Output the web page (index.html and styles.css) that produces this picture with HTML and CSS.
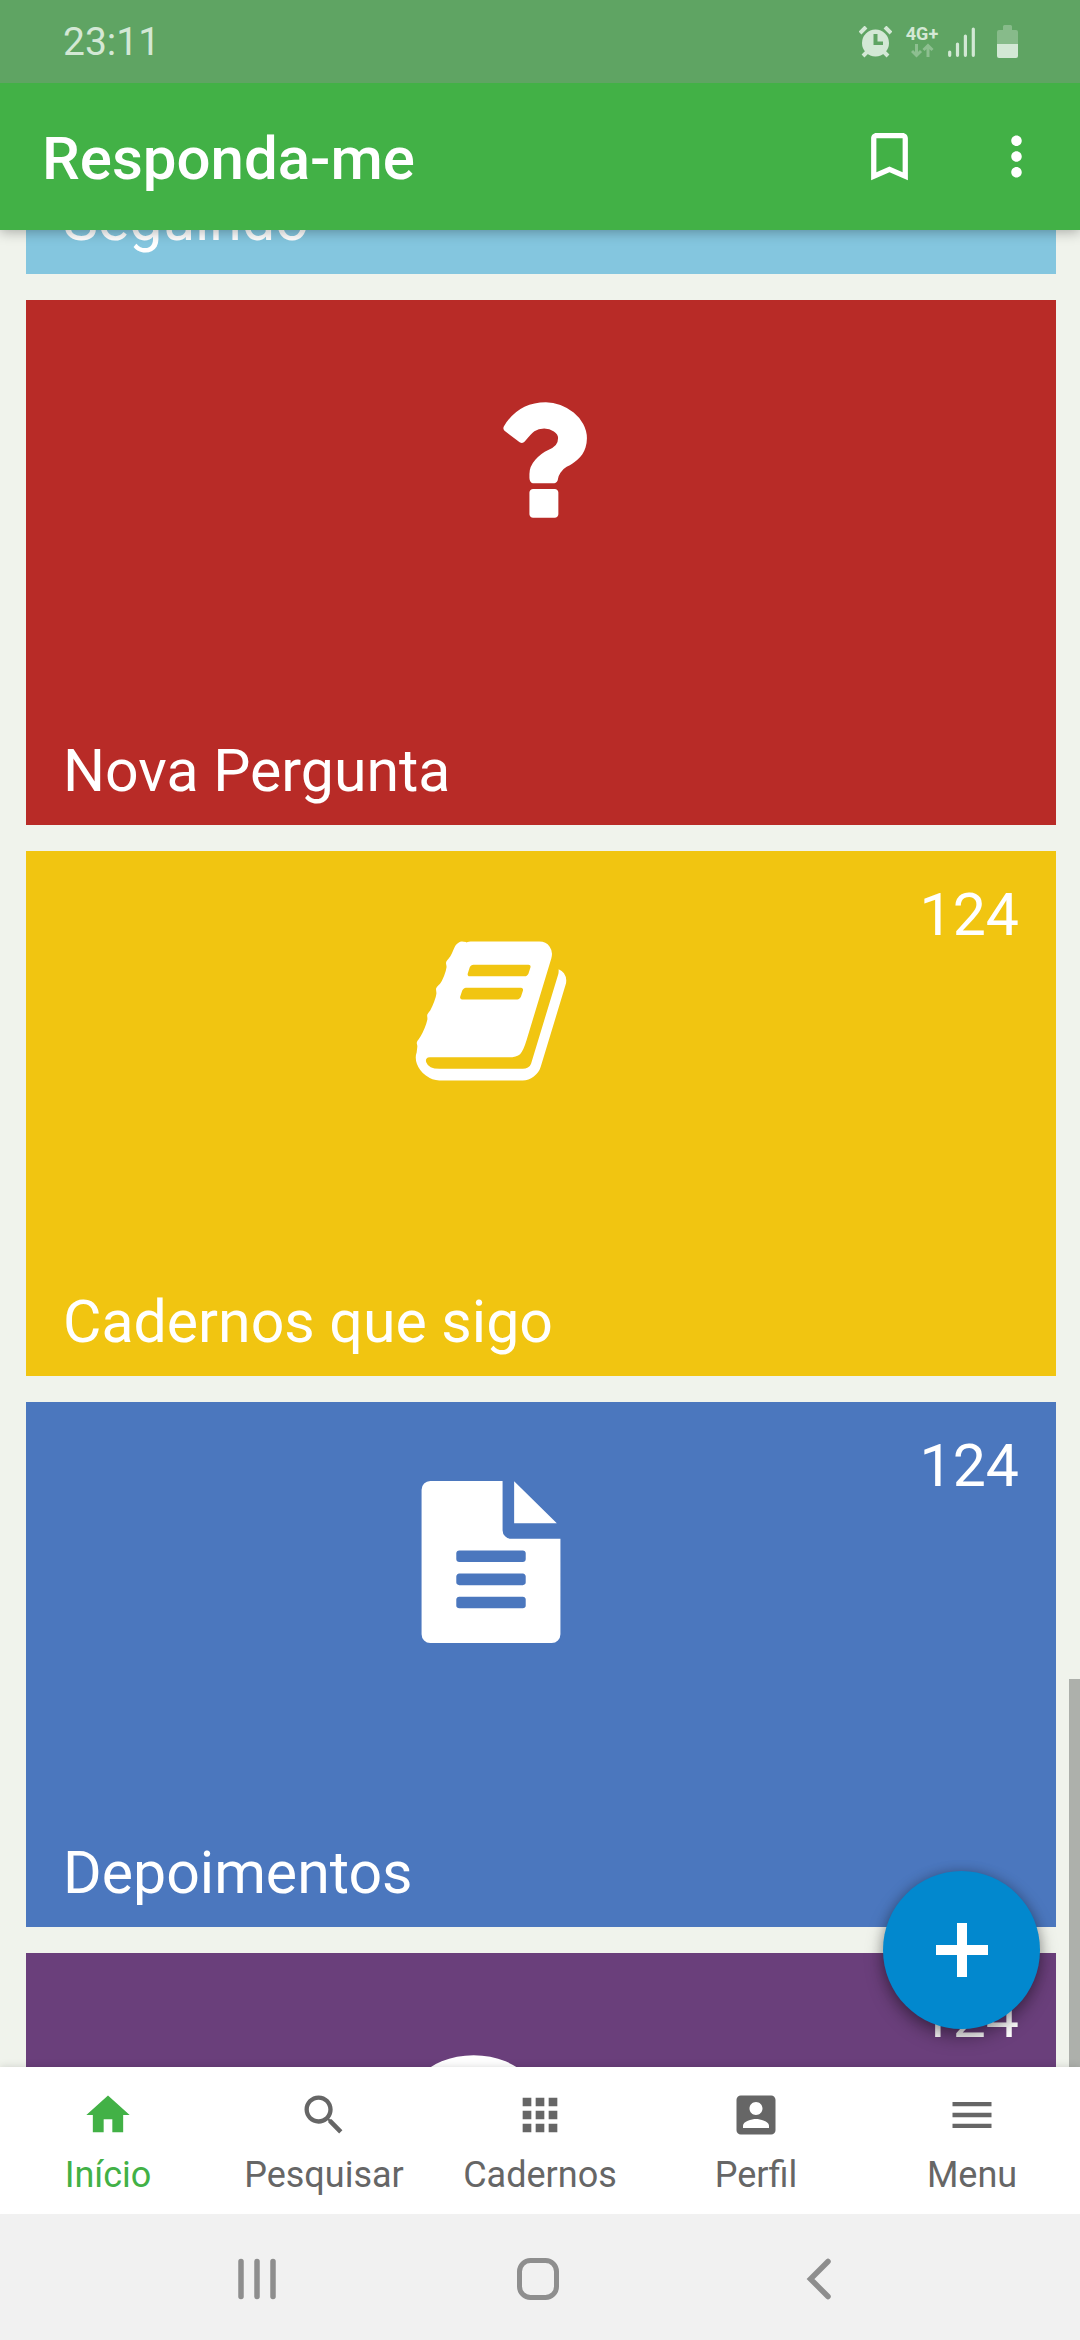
FILE: index.html
```html
<!DOCTYPE html>
<html lang="pt-BR">
<head>
<meta charset="utf-8">
<meta name="viewport" content="width=device-width, initial-scale=1">
<title>Responda-me</title>
<link rel="stylesheet" href="styles.css">
</head>
<body>
<div class="screen">
  <div class="status">
    <span class="clock">23:11</span>
    <div class="status-icons">
      <svg class="alarm" viewBox="0 0 33 32" aria-hidden="true">
        <path d="M1 7 7 1M32 7 26 1" stroke="currentColor" stroke-width="4" fill="none"/>
        <path d="M9 25 4 30M24 25 29 30" stroke="currentColor" stroke-width="4" fill="none"/>
        <path fill="currentColor" fill-rule="evenodd" d="M16.500 3.500a13.500 13.500 0 1 0 0 27a13.500 13.500 0 0 0 0-27zM14.500 8h4v7.500h5.500v3.500h-9.500z"/>
      </svg>
      <div class="network">
        <span>4G+</span>
        <svg class="arrows" viewBox="0 0 23 15" aria-hidden="true"><path d="M5.500 1v11M1 8l4.500 4.500L10 8M17 14V3M12.500 7 17 2.500 21.500 7" fill="none" stroke="currentColor" stroke-width="3"/></svg>
      </div>
      <svg class="signal" viewBox="0 0 27 30" aria-hidden="true"><path d="M1.700 25v3.300M9.500 17v11.300M17.400 9v19.300M25.300 2v26.300" stroke="currentColor" stroke-width="3.200" stroke-linecap="round"/></svg>
      <svg class="battery" viewBox="0 0 21 33" aria-hidden="true"><path d="M6 5V1.500Q6 0 7.500 0h6Q15 0 15 1.500V5h4q2 0 2 2v12H0V7q0-2 2-2z" fill="currentColor" opacity=".35"/><path d="M0 19h21v12q0 2-2 2H2q-2 0-2-2z" fill="currentColor"/></svg>
    </div>
  </div>

  <header class="appbar">
    <h1>Responda-me</h1>
    <button class="icon-button" aria-label="Favoritos"><svg viewBox="0 0 24 24"><path d="M17 3H7c-1.100 0-2 .9-2 2v16l7-3 7 3V5c0-1.100-.9-2-2-2zm0 15-5-2.180L7 18V5h10z"/></svg></button>
    <button class="icon-button" aria-label="Mais opções"><svg viewBox="0 0 24 24"><path d="M12 8c1.100 0 2-.9 2-2s-.9-2-2-2-2 .9-2 2 .9 2 2 2zm0 2c-1.100 0-2 .9-2 2s.9 2 2 2 2-.9 2-2-.9-2-2-2zm0 6c-1.100 0-2 .9-2 2s.9 2 2 2 2-.9 2-2-.9-2-2-2z"/></svg></button>
  </header>

  <div class="viewport">
    <main class="cards">
      <a class="card sky" href="#seguindo">
        <span class="card-name">Seguindo</span>
      </a>
      <a class="card red" href="#nova-pergunta">
        <span class="card-top">
          <svg class="card-icon" viewBox="0 0 1792 1792"><path d="M1088 1256v240q0 16-12 28t-28 12h-240q-16 0-28-12t-12-28v-240q0-16 12-28t28-12h240q16 0 28 12t12 28zm316-600q0 54-15.500 101t-35 76.500-55 59.500-57.500 43.500-61 35.500q-41 23-68.500 65t-27.500 67q0 17-12 32.500t-28 15.500h-240q-15 0-25.500-18.500t-10.500-37.500v-45q0-83 65-156.500t143-108.500q59-27 84-56t25-76q0-42-46.500-74t-107.500-32q-65 0-108 29-35 25-107 115-13 16-31 16-12 0-25-8l-164-125q-13-10-15.500-25t5.500-28q160-266 464-266 80 0 161 31t146 83 106 127.500 41 158.500z"/></svg>
        </span>
        <span class="card-name">Nova Pergunta</span>
      </a>
      <a class="card yellow" href="#cadernos-que-sigo">
        <span class="card-top">
          <svg class="card-icon" viewBox="0 0 1792 1792"><path d="M1703 478q40 57 18 129l-275 906q-19 64-76.500 107.500t-122.500 43.500h-923q-77 0-148.500-53.500t-99.500-131.500q-24-67-2-127 0-4 3-27t4-37q1-8-3-21.500t-3-19.500q2-11 8-21t16.500-23.500 16.500-23.500q23-38 45-91.500t30-91.500q3-10 .5-30t-.5-28q3-11 17-28t17-23q21-36 42-92t25-90q1-9-2.500-32t.5-28q4-13 22-30.500t22-22.500q19-26 42.500-84.500t27.500-96.500q1-8-3-25.500t-2-26.500q2-8 9-18t18-23 17-21q8-12 16.500-30.500t15-35 16-36 19.500-32 26.500-23.500 36-11.500 47.500 5.500l-1 3q38-9 51-9h761q74 0 114 56t18 130l-274 906q-36 119-71.500 153.500t-128.500 34.500h-869q-27 0-38 15-11 16-1 43 24 70 144 70h923q29 0 56-15.500t35-41.500l300-987q7-22 5-57 38 15 59 43zm-1064 2q-4 13 2 22.500t20 9.500h608q13 0 25.500-9.500t16.500-22.500l21-64q4-13-2-22.500t-20-9.500h-608q-13 0-25.500 9.500t-16.500 22.500zm-83 256q-4 13 2 22.500t20 9.500h608q13 0 25.500-9.500t16.500-22.500l21-64q4-13-2-22.500t-20-9.500h-608q-13 0-25.500 9.500t-16.500 22.500z"/></svg>
          <span class="count">124</span>
        </span>
        <span class="card-name">Cadernos que sigo</span>
      </a>
      <a class="card blue" href="#depoimentos">
        <span class="card-top">
          <svg class="card-icon" viewBox="0 0 1792 1792"><path d="M1624 468 1152 4v464zm-504 172h544v1056q0 40-28 68t-68 28h-1344q-40 0-68-28t-28-68v-1600q0-40 28-68t68-28h800v544q0 40 28 68t68 28zm160 736v-64q0-14-9-23t-23-9h-704q-14 0-23 9t-9 23v64q0 14 9 23t23 9h704q14 0 23-9t9-23zm0-256v-64q0-14-9-23t-23-9h-704q-14 0-23 9t-9 23v64q0 14 9 23t23 9h704q14 0 23-9t9-23zm0-256v-64q0-14-9-23t-23-9h-704q-14 0-23 9t-9 23v64q0 14 9 23t23 9h704q14 0 23-9t9-23z" fill-rule="evenodd"/></svg>
          <span class="count">124</span>
        </span>
        <span class="card-name">Depoimentos</span>
      </a>
      <a class="card purple" href="#comentarios" aria-label="124">
        <span class="card-top">
          <svg class="card-icon" viewBox="0 0 1792 1792"><path d="M1408 768q0 139-94 257t-256.500 186.500-353.500 68.500q-86 0-176-16-124 88-278 128-36 9-86 16h-3q-11 0-20.500-8t-11.500-21q-1-3-1-6.500t.5-6.500 2-6l2.500-5 3.500-5.500 4-5 4.500-5 4-4.500q5-6 23-25t26-29.500 22.500-29 25-38.500 20.500-44q-124-72-195-177t-71-224q0-139 94-257t256.500-186.500 353.500-68.500 353.500 68.500 256.500 186.500 94 257zm384 256q0 120-71 224.500t-195 176.500q10 24 20.500 44t25 38.500 22.500 29 26 29.500 23 25q1 1 4 4.500t4.500 5 4 5 3.500 5.500l2.500 5 2 6 .5 6.500-1 6.500q-3 14-13 22t-22 7q-50-7-86-16-154-40-278-128-90 16-176 16-271 0-472-132 58 4 88 4 161 0 309-45t264-129q125-92 192-212t67-254q0-77-23-152 129 71 204 178t75 230z"/></svg>
          <span class="count">124</span>
        </span>
      </a>
    </main>
    <div class="scroll-thumb"></div>
    <button class="fab" aria-label="Adicionar"><svg viewBox="0 0 54 54"><path d="M27 0v54M1 27h52" stroke="currentColor" stroke-width="10"/></svg></button>
  </div>

  <nav class="tabs">
    <a class="tab active" href="#inicio"><svg viewBox="0 0 24 24"><path d="M10 20v-6h4v6h5v-8h3L12 3 2 12h3v8z"/></svg>Início</a>
    <a class="tab" href="#pesquisar"><svg viewBox="0 0 24 24"><path d="M15.500 14h-.79l-.28-.27C15.410 12.590 16 11.110 16 9.500 16 5.910 13.090 3 9.500 3S3 5.910 3 9.500 5.910 16 9.500 16c1.610 0 3.090-.59 4.230-1.570l.27.28v.79l5 4.990L20.490 19zm-6 0C7.010 14 5 11.990 5 9.500S7.010 5 9.500 5 14 7.010 14 9.500 11.990 14 9.500 14z"/></svg>Pesquisar</a>
    <a class="tab" href="#cadernos"><svg viewBox="0 0 24 24"><path d="M4 8h4V4H4zm6 12h4v-4h-4zm-6 0h4v-4H4zm0-6h4v-4H4zm6 0h4v-4h-4zm6-10v4h4V4zm-6 4h4V4h-4zm6 6h4v-4h-4zm0 6h4v-4h-4z"/></svg>Cadernos</a>
    <a class="tab" href="#perfil"><svg viewBox="0 0 24 24"><path d="M3 5v14c0 1.100.89 2 2 2h14c1.100 0 2-.9 2-2V5c0-1.100-.9-2-2-2H5c-1.110 0-2 .9-2 2zm12 4c0 1.660-1.340 3-3 3s-3-1.340-3-3 1.340-3 3-3 3 1.340 3 3zm-9 8c0-2 4-3.100 6-3.100s6 1.100 6 3.100v1H6z"/></svg>Perfil</a>
    <a class="tab" href="#menu"><svg viewBox="0 0 24 24"><path d="M3 18h18v-2H3zm0-5h18v-2H3zm0-7v2h18V6z"/></svg>Menu</a>
  </nav>

  <div class="system-nav">
    <button aria-label="Recentes"><svg viewBox="0 0 42 42"><path d="M5 3.500v35M21 3.500v35M37 3.500v35" stroke-width="5.500" stroke-linecap="round"/></svg></button>
    <button aria-label="Tela inicial"><svg viewBox="0 0 42 42"><rect x="2.500" y="2.500" width="37" height="37" rx="11" stroke-width="5"/></svg></button>
    <button aria-label="Voltar"><svg viewBox="0 0 42 42"><path d="M30 3.500 12.500 21 30 38.500" stroke-width="5.500" stroke-linecap="round"/></svg></button>
  </div>
</div>
</body>
</html>
```

FILE: styles.css
```css
* {
  box-sizing: border-box;
}

body {
  margin: 0;
  font-family: Roboto, "Liberation Sans", sans-serif;
  background: #f0f3ec;
}

svg {
  display: block;
  fill: currentColor;
}

button {
  display: grid;
  place-items: center;
  padding: 0;
  border: 0;
  background: none;
  color: inherit;
}

a {
  color: inherit;
  text-decoration: none;
}

.screen {
  display: flex;
  flex-direction: column;
  height: 100vh;
}

/* Status bar */
.status {
  z-index: 2;
  display: flex;
  align-items: center;
  justify-content: space-between;
  height: 83px;
  padding: 0 62px 0 63px;
  background: #5fa463;
  color: #d3e8d5;
}

.clock {
  font-size: 39px;
  line-height: 44px;
}

.status-icons {
  display: flex;
  align-items: center;
}

.alarm {
  width: 33px;
  height: 32px;
}

.network {
  display: flex;
  flex-direction: column;
  align-items: center;
  width: 32px;
  margin: 0 10px 0 14px;
  font-size: 18px;
  font-weight: 700;
  line-height: 18px;
}

.arrows {
  width: 23px;
  height: 15px;
  opacity: .4;
}

.signal {
  width: 27px;
  height: 30px;
  margin-right: 22px;
}

.battery {
  width: 21px;
  height: 33px;
}

/* App bar */
.appbar {
  z-index: 1;
  display: flex;
  align-items: center;
  gap: 64px;
  height: 147px;
  padding: 0 32px 0 42px;
  background: #42b146;
  color: #fff;
  box-shadow: 0 2px 12px rgba(0, 0, 0, .3);
}

.appbar h1 {
  flex: 1;
  margin: 0;
  padding-top: 4px;
  font-size: 60px;
  font-weight: 500;
  line-height: 70px;
}

.icon-button svg {
  width: 63px;
  height: 63px;
}

/* Card list */
.viewport {
  position: relative;
  flex: 1;
  min-height: 0;
  overflow: hidden;
}

.cards {
  display: flex;
  flex-direction: column;
  gap: 26px;
  margin-top: -481px;
  padding: 0 24px 0 26px;
}

.card {
  display: flex;
  flex-direction: column;
  min-height: 525px;
  padding: 30px 37px 20px;
  color: #fff;
  font-size: 59px;
  line-height: 68px;
}

.card-top {
  display: flex;
  align-items: flex-start;
}

.card-icon {
  width: 162px;
  height: 162px;
  margin: 49px auto 0;
}

.card-name {
  margin-top: auto;
}

.sky { background: #84c6df; }
.red { background: #b82b27; }
.yellow { background: #f1c511; }
.blue { background: #4b77be; }
.purple { background: #6a3f7b; }

.scroll-thumb {
  position: absolute;
  right: 0;
  bottom: 0;
  width: 11px;
  height: 388px;
  background: #adb0ab;
}

.fab {
  position: absolute;
  right: 40px;
  bottom: 38px;
  width: 157px;
  height: 158px;
  border-radius: 50%;
  background: #0288ce;
  color: #fff;
  box-shadow: 0 8px 18px rgba(0, 0, 0, .35), 0 0 12px rgba(0, 0, 0, .2);
}

.fab svg {
  width: 54px;
  height: 54px;
}

/* Tabs */
.tabs {
  z-index: 1;
  display: grid;
  grid-template-columns: repeat(5, 1fr);
  height: 147px;
  padding-top: 22px;
  background: #fff;
  color: #666;
  box-shadow: 0 0 8px rgba(0, 0, 0, .15);
}

.tab {
  display: flex;
  flex-direction: column;
  align-items: center;
  gap: 14px;
  font-size: 36px;
  line-height: 40px;
}

.tab.active {
  color: #42b146;
}

.tab svg {
  width: 52px;
  height: 52px;
}

/* System navigation */
.system-nav {
  z-index: 1;
  display: grid;
  grid-template-columns: repeat(3, 1fr);
  height: 126px;
  padding: 4px 120px 0 116px;
  background: #f1f1f1;
  color: #8e8e8e;
}

.system-nav svg {
  width: 42px;
  height: 42px;
  fill: none;
  stroke: currentColor;
}
```
